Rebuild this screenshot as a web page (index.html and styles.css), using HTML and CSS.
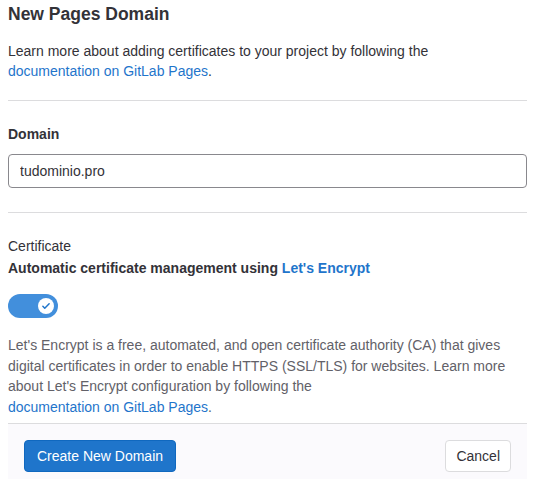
FILE: index.html
```html
<!DOCTYPE html>
<html>
<head>
<meta charset="utf-8">
<link rel="stylesheet" href="styles.css">
</head>
<body>
<div class="page">
  <h1 class="title">New Pages Domain</h1>
  <p class="intro">Learn more about adding certificates to your project by following the <span class="doc-line"><a href="#">documentation on GitLab Pages</a>.</span></p>
  <hr class="divider">
  <label class="field-label" for="domain">Domain</label>
  <input id="domain" class="input" type="text" value="tudominio.pro">
  <hr class="divider divider-2">
  <div class="cert-label">Certificate</div>
  <div class="cert-title">Automatic certificate management using <a href="#">Let's Encrypt</a></div>
  <div class="toggle">
    <span class="knob">
      <svg width="10" height="10" viewBox="0 0 16 16"><path d="M3 8.5l3 3 7-7" fill="none" stroke="#1f75cb" stroke-width="2.4" stroke-linecap="round" stroke-linejoin="round"/></svg>
    </span>
  </div>
  <p class="help">Let's Encrypt is a free, automated, and open certificate authority (CA) that gives digital certificates in order to enable HTTPS (SSL/TLS) for websites. Learn more about Let's Encrypt configuration by following the <span class="doc-line"><a href="#">documentation on GitLab Pages</a>.</span></p>
  <div class="footer">
    <button class="btn btn-primary">Create New Domain</button>
    <button class="btn btn-default">Cancel</button>
  </div>
</div>
</body>
</html>
```
FILE: styles.css
```css
html, body {
  margin: 0;
  padding: 0;
  background: #fff;
}
body {
  font-family: "Liberation Sans", Arial, sans-serif;
  font-size: 14px;
  color: #333238;
}
.page {
  padding: 0 8px;
}
a {
  color: #1f75cb;
  text-decoration: none;
}
.doc-line {
  display: block;
}
.title {
  margin: 0;
  padding-top: 2px;
  font-size: 17.5px;
  line-height: 24px;
  font-weight: 700;
}
.intro {
  margin: 15px 0 0;
  line-height: 20px;
}
.divider {
  margin: 19px 0 0;
  border: 0;
  border-top: 1px solid #dcdcde;
  height: 0;
}
.divider-2 {
  margin-top: 24px;
}
.field-label {
  display: block;
  margin-top: 23px;
  line-height: 20px;
  font-weight: 700;
}
.input {
  display: block;
  box-sizing: border-box;
  width: 100%;
  height: 34px;
  margin-top: 10px;
  padding: 0 11px;
  border: 1px solid #89888d;
  border-radius: 4px;
  font: inherit;
  font-size: 14px;
  color: #333238;
  background: #fff;
}
.cert-label {
  margin-top: 23px;
  line-height: 20px;
}
.cert-title {
  margin-top: 2px;
  line-height: 20px;
  font-weight: 700;
}
.toggle {
  margin-top: 16px;
  width: 50px;
  height: 24px;
  border-radius: 12px;
  background: #428fdc;
  display: flex;
  align-items: center;
  justify-content: flex-end;
  padding-right: 4px;
  box-sizing: border-box;
}
.knob {
  width: 16px;
  height: 16px;
  border-radius: 50%;
  background: #fff;
  display: flex;
  align-items: center;
  justify-content: center;
}
.help {
  margin: 17px 0 0;
  line-height: 20.5px;
  color: #626168;
}
.footer {
  margin-top: 6px;
  border-top: 1px solid #dcdcde;
  background: #fbfafd;
  padding: 16px;
  display: flex;
  justify-content: space-between;
}
.btn {
  height: 32px;
  padding: 0 12px;
  border-radius: 4px;
  font: inherit;
  font-size: 14px;
  line-height: 20px;
}
.btn-primary {
  background: #1f75cb;
  color: #fff;
  border: 1px solid #1068bf;
}
.btn-default {
  background: #fff;
  color: #333238;
  border: 1px solid #dcdcde;
  padding: 0 10px;
}
```
